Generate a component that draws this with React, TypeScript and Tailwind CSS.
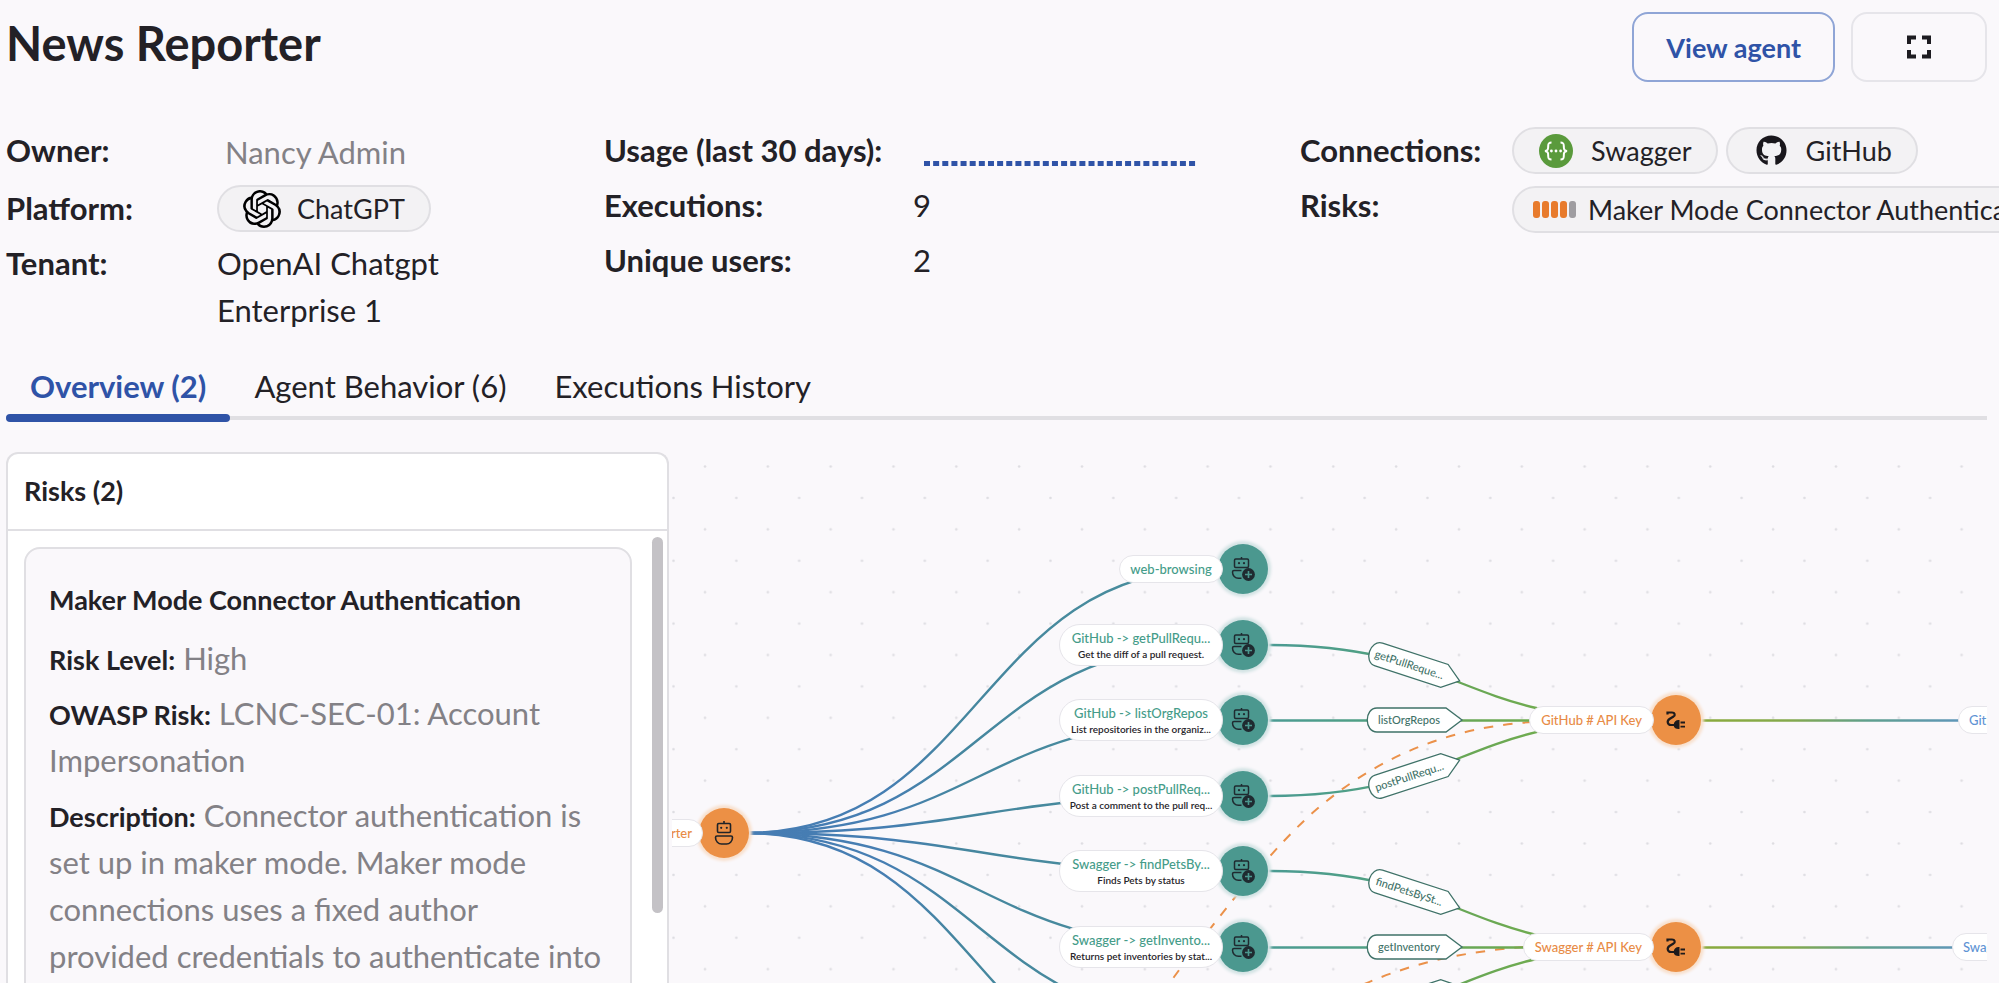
import type { ReactNode } from "react";
import { SiOpenai } from "react-icons/si";
import { FaGithub } from "react-icons/fa";

function FullscreenIcon() {
  return (
    <svg viewBox="0 0 24 24" className="size-6" fill="none" stroke="#1d1c21" strokeWidth="4" aria-hidden="true">
      <path d="M2 9V2.500H9M15 2.500H22V9M22 15V21.500H15M9 21.500H2V15" />
    </svg>
  );
}

function SwaggerIcon() {
  return (
    <svg viewBox="0 0 34 34" className="mr-[18px] ml-[5px] size-[34px]" fill="none" stroke="#fff" strokeWidth="2" aria-hidden="true">
      <circle cx="17" cy="17" r="17" fill="#5a9a3c" stroke="none" />
      <path d="M12.500 8.500C9.500 8.500 9.200 9.500 9.200 12C9.200 15 9 16.500 6 17C9 17.500 9.200 19 9.200 22C9.200 24.500 9.500 25.500 12.500 25.500" />
      <path d="M21.500 8.500C24.500 8.500 24.800 9.500 24.800 12C24.800 15 25 16.500 28 17C25 17.500 24.800 19 24.800 22C24.800 24.500 24.500 25.500 21.500 25.500" />
      <g fill="#fff" stroke="none">
        <circle cx="12.400" cy="17" r="1.400" />
        <circle cx="17" cy="17" r="1.400" />
        <circle cx="21.600" cy="17" r="1.400" />
      </g>
    </svg>
  );
}

function Chip({ icon, children }: { icon: ReactNode; children: ReactNode }) {
  return (
    <span className="flex h-[47px] shrink-0 items-center whitespace-nowrap rounded-full border-2 border-[#e0dfe3] bg-[#f3f2f4] pr-6 pl-5 text-[27px]">
      {icon}
      {children}
    </span>
  );
}

function Field({ label, width, children }: { label: string; width: string; children: ReactNode }) {
  return (
    <div className="flex items-start">
      <dt className={`shrink-0 font-bold ${width}`}>{label}</dt>
      <dd className="flex">{children}</dd>
    </div>
  );
}

function RiskMeter() {
  return (
    <span className="-ml-px mr-3 flex gap-0.5" aria-hidden="true">
      {[1, 2, 3, 4, 5].map((n) => (
        <span key={n} className={n < 5 ? "h-[17px] w-[7px] rounded-[3px] bg-[#e87b2c]" : "h-[17px] w-[7px] rounded-[3px] bg-[#9f9da1]"} />
      ))}
    </span>
  );
}

const tabs = ["Overview (2)", "Agent Behavior (6)", "Executions History"];

function RobotIcon() {
  return (
    <svg viewBox="0 0 24 24" className="size-6" fill="none" stroke="#1f2328" strokeWidth="1.600" strokeLinejoin="round" aria-hidden="true">
      <path d="M12 0V2.500" />
      <rect x="5.500" y="2.500" width="13" height="9" rx="1.200" />
      <path d="M5 15H19Q20.500 15 20.500 16.500C20.500 20.500 17.500 23 14.500 23H9.500C6.500 23 3.500 20.500 3.500 16.500Q3.500 15 5 15Z" />
      <circle cx="9.200" cy="6.800" r="1.100" fill="#1f2328" stroke="none" />
      <circle cx="14.800" cy="6.800" r="1.100" fill="#1f2328" stroke="none" />
    </svg>
  );
}

function RobotPlusIcon() {
  return (
    <svg viewBox="0 0 24 24" className="size-6" fill="none" stroke="#1f2a30" strokeWidth="1.500" strokeLinejoin="round" aria-hidden="true">
      <path d="M10.500 0V2" />
      <rect x="3.500" y="2" width="14" height="8.500" rx="1.200" />
      <path d="M10.500 13.500H3Q1.500 13.500 1.500 15C1.500 18.500 4 21.300 7.500 21.300H10.500" />
      <circle cx="8" cy="6.200" r="1.100" fill="#1f2a30" stroke="none" />
      <circle cx="13" cy="6.200" r="1.100" fill="#1f2a30" stroke="none" />
      <circle cx="17.500" cy="17.500" r="6.400" fill="#1f2a30" stroke="none" />
      <path d="M17.500 14V21M14 17.500H21" stroke="#4b988f" strokeWidth="1.600" />
    </svg>
  );
}

function PlugIcon() {
  return (
    <svg viewBox="0 0 24 24" className="size-6" fill="none" stroke="#1d1a1c" aria-hidden="true">
      <path d="M3.500 6.500V4.500H8C11 4.500 11.500 7.500 9.500 8.500L5.500 11C2.500 13 3.500 17 7 17H11" strokeWidth="2.200" />
      <path d="M9.500 17C10 13.500 12 12 14.500 12H15.500V21H14.500C12 21 10 20 9.500 17Z" fill="#1d1a1c" stroke="none" />
      <path d="M16.500 14.500H21M16.500 18.700H21" strokeWidth="1.800" />
    </svg>
  );
}

const actions = [
  { title: "web-browsing", y: 117 },
  { title: "GitHub -> getPullRequ...", note: "Get the diff of a pull request.", y: 193 },
  { title: "GitHub -> listOrgRepos", note: "List repositories in the organiz...", y: 268 },
  { title: "GitHub -> postPullReq...", note: "Post a comment to the pull req...", y: 344 },
  { title: "Swagger -> findPetsBy...", note: "Finds Pets by status", y: 419 },
  { title: "Swagger -> getInvento...", note: "Returns pet inventories by stat...", y: 495 },
];

const edgeTargets = [117, 193, 268, 344, 419, 495, 570, 646];

const keys = [
  { title: "GitHub # API Key", y: 268, target: "GitHub", targetX: 1286 },
  { title: "Swagger # API Key", y: 495, target: "Swagger", targetX: 1280 },
];

const calls = [
  { label: "getPullReque...", from: 193, to: 268, y: 214, angle: 18 },
  { label: "listOrgRepos", from: 268, to: 268, y: 268, angle: 0 },
  { label: "postPullRequ...", from: 344, to: 268, y: 323, angle: -18 },
  { label: "findPetsBySt...", from: 419, to: 495, y: 441, angle: 18 },
  { label: "getInventory", from: 495, to: 495, y: 495, angle: 0 },
  { label: "", from: 570, to: 495, y: 549, angle: -18 },
];

function curve(x1: number, y1: number, x2: number, y2: number) {
  const mid = (x1 + x2) / 2;
  return `M${x1} ${y1}C${mid} ${y1} ${mid} ${y2} ${x2} ${y2}`;
}

function Edges() {
  return (
    <svg className="absolute inset-0 size-full" fill="none" aria-hidden="true">
      <defs>
        <pattern id="dots" x="0" y="13" width="62.830" height="62.830" patternUnits="userSpaceOnUse">
          <circle cx="33" cy="1.500" r="1.300" fill="#dedde2" />
          <circle cx="1.500" cy="32.900" r="1.300" fill="#dedde2" />
        </pattern>
        <linearGradient id="agentEdge" gradientUnits="userSpaceOnUse" x1="75" y1="0" x2="544" y2="0">
          <stop offset="0" stopColor="#467cb3" />
          <stop offset="0.300" stopColor="#467eb2" />
          <stop offset="0.450" stopColor="#45869f" />
          <stop offset="1" stopColor="#4a8f9b" />
        </linearGradient>
        <linearGradient id="callEdge" gradientUnits="userSpaceOnUse" x1="596" y1="0" x2="860" y2="0">
          <stop offset="0" stopColor="#4b9b93" />
          <stop offset="0.350" stopColor="#4f9f85" />
          <stop offset="0.700" stopColor="#67a657" />
          <stop offset="1" stopColor="#6fab50" />
        </linearGradient>
        <linearGradient id="keyEdge" gradientUnits="userSpaceOnUse" x1="1028" y1="0" x2="1286" y2="0">
          <stop offset="0" stopColor="#8aaa3c" />
          <stop offset="0.350" stopColor="#84a94c" />
          <stop offset="0.650" stopColor="#5f9f8d" />
          <stop offset="1" stopColor="#5f96b8" />
        </linearGradient>
      </defs>
      <rect width="100%" height="100%" fill="url(#dots)" />
      <g stroke="#eb914a" strokeWidth="2" strokeDasharray="9.500 10">
        <path d="M860 270C783 275 713 301 651 352C603 391 543 469 502 525L480 560" />
        <path d="M852 495C788 500 738 512 690 533" />
      </g>
      <g stroke="url(#agentEdge)" strokeWidth="2.400">
        {edgeTargets.map((y) => (
          <path key={y} d={curve(73, 381, 541, y)} />
        ))}
      </g>
      <g stroke="url(#callEdge)" strokeWidth="2.400">
        {calls.map((c) => (
          <path key={c.y} d={c.from === c.to ? `M596 ${c.from}.5H990V${c.from}` : curve(596, c.from, 979, c.to)} />
        ))}
      </g>
      <g stroke="url(#keyEdge)" strokeWidth="2.400">
        {keys.map((k) => (
          <path key={k.title} d={`M1028 ${k.y}.5H1288V${k.y}`} />
        ))}
      </g>
      {calls.map((c) => (
        <g key={c.y} transform={`translate(742 ${c.y}) rotate(${c.angle})`}>
          <path d="M-37 -12H32L48 0L32 12H-37C-50 12 -50 -12 -37 -12Z" fill="#fff" stroke="#3f7268" strokeWidth="1.300" />
          {c.label && (
            <text x="-5" y="4" textAnchor="middle" fontSize="11" fontWeight="500" fill="#3f7268">
              {c.label}
            </text>
          )}
        </g>
      ))}
    </svg>
  );
}

const pill = "absolute flex -translate-y-1/2 flex-col items-center justify-center rounded-full border border-[#e6e5ea] bg-white font-medium whitespace-nowrap";
const disc = "absolute flex size-[50px] -translate-x-1/2 -translate-y-1/2 items-center justify-center rounded-full";

function Graph() {
  return (
    <section aria-label="Agent graph" className="relative ml-[3px] min-w-0 flex-1 overflow-hidden">
      <Edges />
      <div className={`${disc} bg-[#ec9045] shadow-[0_0_3px_3px_#f8e0cd]`} style={{ left: 52, top: 381 }}>
        <RobotIcon />
      </div>
      <div className={`${pill} h-7 w-32 text-[13px] text-[#e88b46]`} style={{ left: -97, top: 381 }}>
        <span className="self-end pr-2.5">News Reporter</span>
      </div>
      {actions.map((a) => (
        <div key={a.title}>
          <div className={`${disc} bg-[#4b988f] shadow-[0_0_3px_3px_#d3e3e4]`} style={{ left: 571, top: a.y }}>
            <RobotPlusIcon />
          </div>
          <div
            className={a.note ? `${pill} h-[42px] w-[164px] left-[387px] text-[#459c89]` : `${pill} h-7 w-[104px] left-[447px] text-[#459c89]`}
            style={{ top: a.y }}
          >
            <span className="text-[13px] leading-[18px]">{a.title}</span>
            {a.note && <span className="text-[10px] leading-[14px] font-semibold text-[#27252a]">{a.note}</span>}
          </div>
        </div>
      ))}
      {keys.map((k) => (
        <div key={k.title}>
          <div className={`${disc} bg-[#ec9045] shadow-[0_0_3px_3px_#f8e0cd]`} style={{ left: 1004, top: k.y }}>
            <PlugIcon />
          </div>
          <div className="absolute left-[782px] flex w-[200px] -translate-y-1/2 justify-end" style={{ top: k.y }}>
            <span className="flex h-7 items-center rounded-full border border-[#e6e5ea] bg-white px-[11px] text-[13px] font-medium whitespace-nowrap text-[#e88b46]">
              {k.title}
            </span>
          </div>
          <div className={`${pill} h-7 px-2.5 text-[13px] text-[#5f94d4]`} style={{ left: k.targetX, top: k.y }}>
            {k.target}
          </div>
        </div>
      ))}
    </section>
  );
}

function Detail({ term, children }: { term: string; children: ReactNode }) {
  return (
    <p className="mt-2 text-[31px] leading-[47px] text-[#838186]">
      <strong className="text-[27px] leading-none font-bold text-[#232126]">{term}</strong> {children}
    </p>
  );
}

export default function App() {
  return (
    <div className="flex h-screen flex-col overflow-hidden bg-[#faf8fb] font-['Lato',sans-serif] text-[31px] leading-[47px] text-[#232126]">
      <header className="flex shrink-0 items-start justify-between pt-3 pr-3 pl-1.5">
        <h1 className="text-[47px] leading-[62px] font-bold">News Reporter</h1>
        <div className="flex gap-4">
          <button type="button" className="h-[70px] rounded-2xl border-2 border-[#8fa5d6] px-8 text-[27px] font-bold text-[#2f53a7]">
            View agent
          </button>
          <button type="button" aria-label="Full screen" className="flex h-[70px] w-[136px] items-center justify-center rounded-2xl border-2 border-[#e6e5ea]">
            <FullscreenIcon />
          </button>
        </div>
      </header>

      <div className="mt-[45px] flex shrink-0 pl-1.5">
        <dl className="flex w-[598px] shrink-0 flex-col gap-2">
          <Field label="Owner:" width="w-[211px]">
            <span className="-mb-0.5 pt-0.5 pl-2 text-[#838186]">Nancy Admin</span>
          </Field>
          <div className="pt-[3px]">
            <Field label="Platform:" width="w-[211px]">
              <Chip icon={<SiOpenai className="mr-4 ml-1 size-[38px] text-black" />}>ChatGPT</Chip>
            </Field>
          </div>
          <Field label="Tenant:" width="w-[211px]">
            <span className="block w-60">OpenAI Chatgpt Enterprise 1</span>
          </Field>
        </dl>
        <dl className="flex w-[696px] shrink-0 flex-col gap-2">
          <Field label="Usage (last 30 days):" width="w-[309px]">
            <svg className="mt-[34px] ml-[11px] h-[5px] w-[272px]" role="img" aria-label="Daily usage">
              <path d="M0 2.500H272" stroke="#2f53a7" strokeWidth="5" strokeDasharray="6 3.140" />
            </svg>
          </Field>
          <Field label="Executions:" width="w-[309px]">9</Field>
          <Field label="Unique users:" width="w-[309px]">2</Field>
        </dl>
        <dl className="flex min-w-0 flex-1 flex-col gap-2">
          <Field label="Connections:" width="w-[212px]">
            <span className="flex gap-2">
              <Chip icon={<SwaggerIcon />}>Swagger</Chip>
              <Chip icon={<FaGithub className="mr-[19px] ml-2 size-[31px] text-[#19171c]" />}>GitHub</Chip>
            </span>
          </Field>
          <Field label="Risks:" width="w-[212px]">
            <span className="flex pt-1">
              <Chip icon={<RiskMeter />}>Maker Mode Connector Authentication</Chip>
            </span>
          </Field>
        </dl>
      </div>

      <nav className="mt-[29px] mr-3 ml-1.5 flex shrink-0 items-end">
        {tabs.map((t, i) => (
          <button
            key={t}
            type="button"
            className={
              i === 0
                ? "relative border-b-4 border-[#e0dfe3] px-6 pb-1.5 font-bold text-[#2f53a7]"
                : "border-b-4 border-[#e0dfe3] px-6 pb-1.5"
            }
          >
            {t}
            {i === 0 && <span className="absolute inset-x-0 -bottom-1.5 h-2 rounded-full bg-[#2f53a7]" />}
          </button>
        ))}
        <div className="h-1 flex-1 bg-[#e0dfe3]" />
      </nav>

      <main className="mt-8 mr-3 ml-1.5 flex min-h-0 flex-1">
        <aside className="flex w-[663px] shrink-0 flex-col rounded-t-xl border-2 border-b-0 border-[#e0dfe3] bg-white">
          <h2 className="border-b-2 border-[#e0dfe3] px-4 pt-[13px] pb-[15px] text-[27px] font-bold">Risks (2)</h2>
          <div className="flex min-h-0 flex-1">
            <div className="min-w-0 flex-1 overflow-hidden pt-4 pr-5 pl-4">
              <article className="rounded-2xl border-2 border-[#e0dfe3] bg-[#faf8fb] pt-[23px] pr-[25px] pb-6 pl-[23px]">
                <h3 className="text-[27px] leading-[55px] font-bold">Maker Mode Connector Authentication</h3>
                <Detail term="Risk Level:">High</Detail>
                <Detail term="OWASP Risk:">LCNC-SEC-01: Account Impersonation</Detail>
                <Detail term="Description:">
                  Connector authentication is set up in maker mode. Maker mode connections uses a fixed author provided credentials to
                  authenticate into
                </Detail>
              </article>
            </div>
            <div className="mt-1.5 mr-1 h-[376px] w-[11px] rounded-full bg-[#c4c2c6]" />
          </div>
        </aside>
        <Graph />
      </main>
    </div>
  );
}
